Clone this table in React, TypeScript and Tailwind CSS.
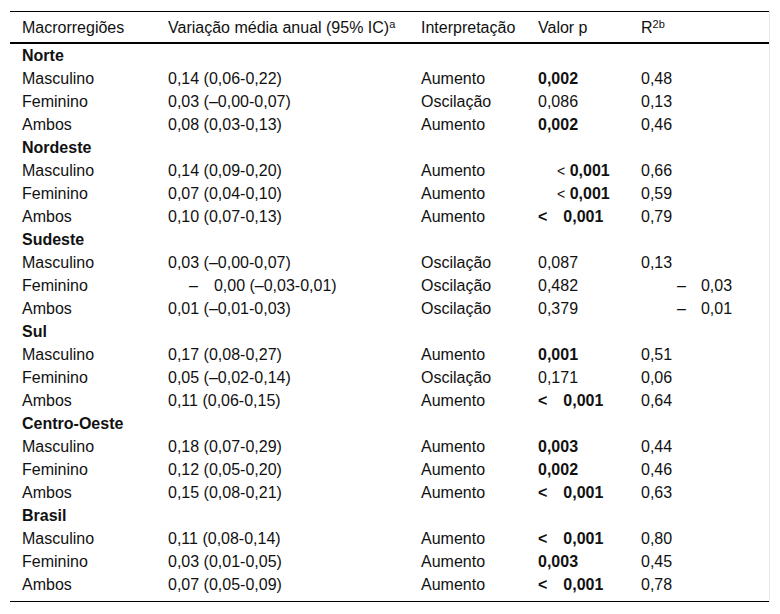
import React from "react";

type Row =
  | { group: string }
  | { sex: string; trend: React.ReactNode; interp: string; p: React.ReactNode; r2: React.ReactNode };

const B = ({ children }: { children: React.ReactNode }) => <b className="font-bold">{children}</b>;

// "< 0,001" written two ways in the source table
const LtTight = () => (
  <span className="pl-[19px]">
    <span className="text-[14px] leading-none">&lt;</span> <B>0,001</B>
  </span>
);
const LtWide = () => (
  <span>
    <B>&lt;</B>
    <span className="inline-block w-[16px]" />
    <B>0,001</B>
  </span>
);
const Neg = ({ v, gap, pad }: { v: string; gap: string; pad: string }) => (
  <span className={pad}>
    –<span className={gap} />
    {v}
  </span>
);

const rows: Row[] = [
  { group: "Norte" },
  { sex: "Masculino", trend: "0,14 (0,06-0,22)", interp: "Aumento", p: <B>0,002</B>, r2: "0,48" },
  { sex: "Feminino", trend: "0,03 (–0,00-0,07)", interp: "Oscilação", p: "0,086", r2: "0,13" },
  { sex: "Ambos", trend: "0,08 (0,03-0,13)", interp: "Aumento", p: <B>0,002</B>, r2: "0,46" },
  { group: "Nordeste" },
  { sex: "Masculino", trend: "0,14 (0,09-0,20)", interp: "Aumento", p: <LtTight />, r2: "0,66" },
  { sex: "Feminino", trend: "0,07 (0,04-0,10)", interp: "Aumento", p: <LtTight />, r2: "0,59" },
  { sex: "Ambos", trend: "0,10 (0,07-0,13)", interp: "Aumento", p: <LtWide />, r2: "0,79" },
  { group: "Sudeste" },
  { sex: "Masculino", trend: "0,03 (–0,00-0,07)", interp: "Oscilação", p: "0,087", r2: "0,13" },
  {
    sex: "Feminino",
    trend: <Neg v="0,00 (–0,03-0,01)" pad="pl-[21px]" gap="inline-block w-[16px]" />,
    interp: "Oscilação",
    p: "0,482",
    r2: <Neg v="0,03" pad="pl-[36px]" gap="inline-block w-[15px]" />,
  },
  {
    sex: "Ambos",
    trend: "0,01 (–0,01-0,03)",
    interp: "Oscilação",
    p: "0,379",
    r2: <Neg v="0,01" pad="pl-[36px]" gap="inline-block w-[15px]" />,
  },
  { group: "Sul" },
  { sex: "Masculino", trend: "0,17 (0,08-0,27)", interp: "Aumento", p: <B>0,001</B>, r2: "0,51" },
  { sex: "Feminino", trend: "0,05 (–0,02-0,14)", interp: "Oscilação", p: "0,171", r2: "0,06" },
  { sex: "Ambos", trend: "0,11 (0,06-0,15)", interp: "Aumento", p: <LtWide />, r2: "0,64" },
  { group: "Centro-Oeste" },
  { sex: "Masculino", trend: "0,18 (0,07-0,29)", interp: "Aumento", p: <B>0,003</B>, r2: "0,44" },
  { sex: "Feminino", trend: "0,12 (0,05-0,20)", interp: "Aumento", p: <B>0,002</B>, r2: "0,46" },
  { sex: "Ambos", trend: "0,15 (0,08-0,21)", interp: "Aumento", p: <LtWide />, r2: "0,63" },
  { group: "Brasil" },
  { sex: "Masculino", trend: "0,11 (0,08-0,14)", interp: "Aumento", p: <LtWide />, r2: "0,80" },
  { sex: "Feminino", trend: "0,03 (0,01-0,05)", interp: "Aumento", p: <B>0,003</B>, r2: "0,45" },
  { sex: "Ambos", trend: "0,07 (0,05-0,09)", interp: "Aumento", p: <LtWide />, r2: "0,78" },
];

export default function App() {
  return (
    <div className="bg-white w-[780px] h-[614px] pt-[10px] font-['Liberation_Sans',Arial,sans-serif] text-[16px] leading-[21px] text-[#111]">
      <div className="ml-[10px] w-[760px] h-[592px] border-r border-[#e8e8e8] pt-px">
        <table className="w-[759px] table-fixed border-collapse">
          <colgroup>
            <col className="w-[146px]" />
            <col className="w-[253px]" />
            <col className="w-[117px]" />
            <col className="w-[103px]" />
            <col />
          </colgroup>
          <thead>
            <tr className="border-t border-black border-b-2 text-left">
              <th className="font-normal pl-3 pt-[5px] pb-[4px]">Macrorregiões</th>
              <th className="font-normal pl-3 pt-[5px] pb-[4px]">
                Variação média anual (95% IC)<sup className="text-[11px] leading-none">a</sup>
              </th>
              <th className="font-normal pl-3 pt-[5px] pb-[4px]">Interpretação</th>
              <th className="font-normal pl-3 pt-[5px] pb-[4px]">Valor p</th>
              <th className="font-normal pl-3 pt-[5px] pb-[4px]">
                R<sup className="text-[11px] leading-none">2b</sup>
              </th>
            </tr>
          </thead>
          <tbody className="border-b border-black">
            {rows.map((r, i) =>
              "group" in r ? (
                <tr key={i}>
                  <td colSpan={5} className="pl-3 py-px font-bold">
                    {r.group}
                  </td>
                </tr>
              ) : (
                <tr key={i}>
                  <td className="pl-3 py-px">{r.sex}</td>
                  <td className="pl-3 py-px whitespace-nowrap">{r.trend}</td>
                  <td className="pl-3 py-px">{r.interp}</td>
                  <td className="pl-3 py-px whitespace-nowrap">{r.p}</td>
                  <td className="pl-3 py-px whitespace-nowrap">{r.r2}</td>
                </tr>
              )
            )}
            <tr>
              <td colSpan={5} className="h-[5px] p-0" />
            </tr>
          </tbody>
        </table>
      </div>
    </div>
  );
}
